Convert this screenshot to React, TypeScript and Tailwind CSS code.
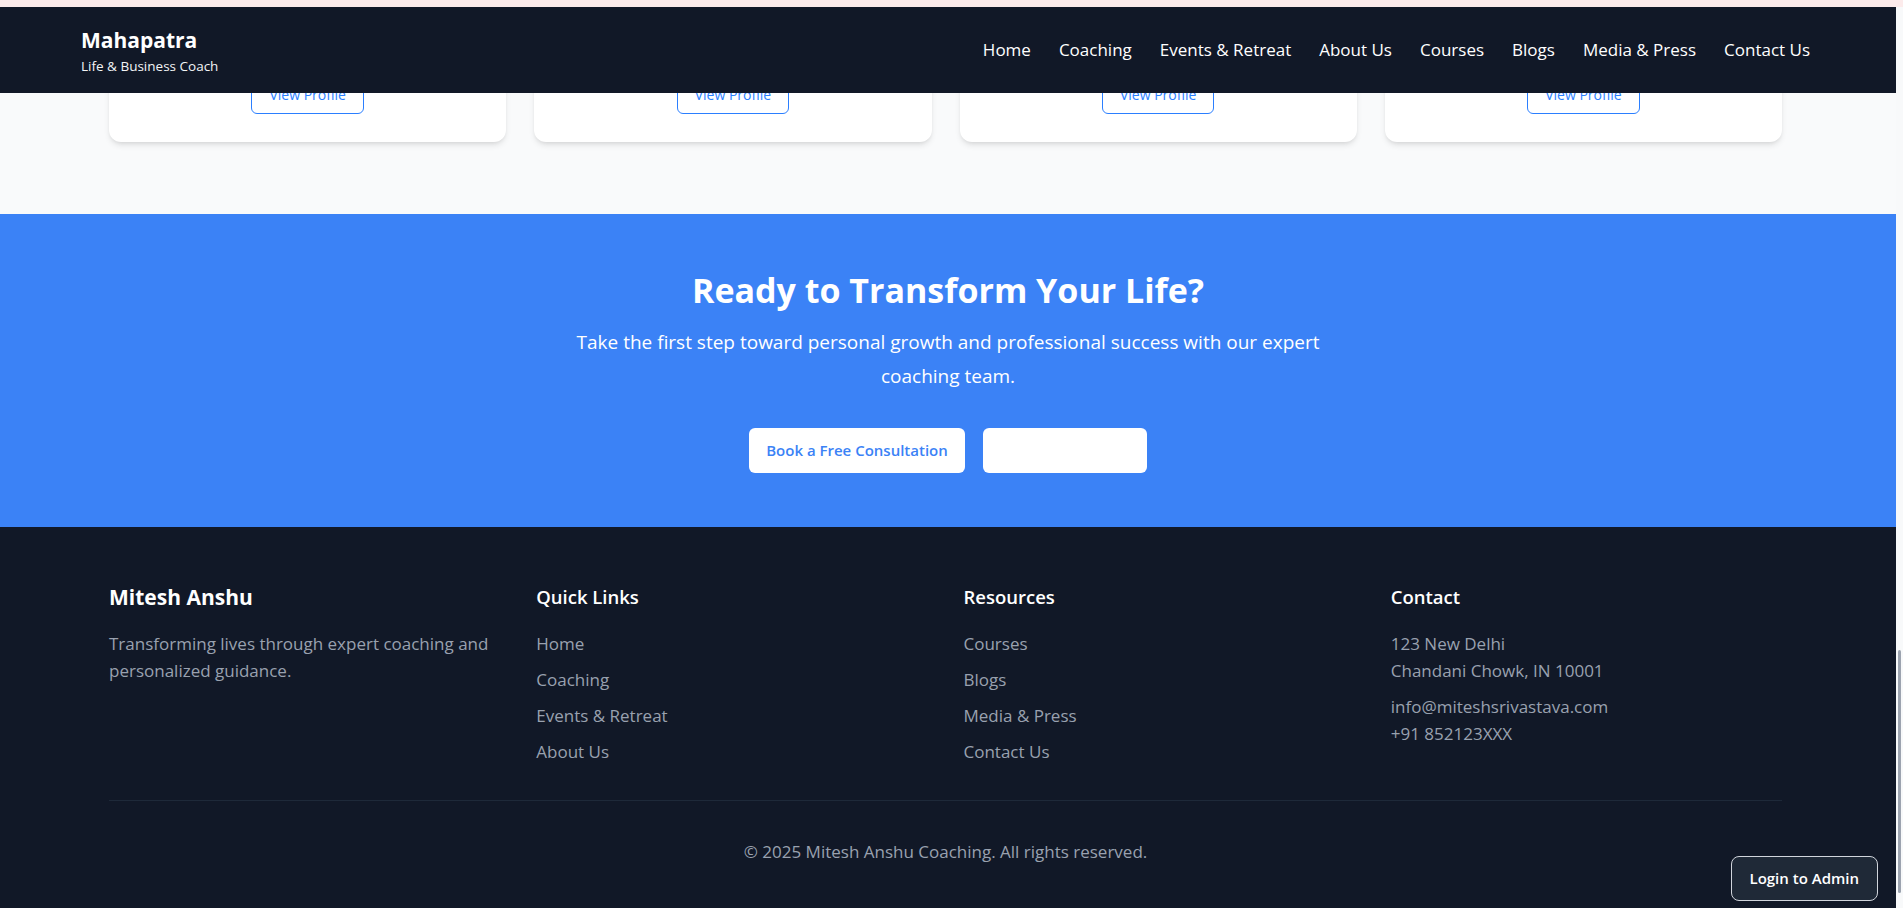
import React from "react";

const navLinks = [
  "Home",
  "Coaching",
  "Events & Retreat",
  "About Us",
  "Courses",
  "Blogs",
  "Media & Press",
  "Contact Us",
];

const quickLinks = ["Home", "Coaching", "Events & Retreat", "About Us"];
const resources = ["Courses", "Blogs", "Media & Press", "Contact Us"];

const CoachCard: React.FC = () => {
  return (
    <div className="flex flex-col items-center rounded-xl bg-white pt-[69px] pb-7 shadow-md">
      <button className="rounded-md border border-blue-500 px-[17px] py-2 text-sm text-blue-500">
        View Profile
      </button>
    </div>
  );
};

const FooterList: React.FC<{ title: string; items: string[] }> = ({ title, items }) => {
  return (
    <div>
      <h4 className="mb-[21px] text-[18.5px] font-semibold leading-7 text-white">{title}</h4>
      <ul className="space-y-3">
        {items.map((item) => (
          <li key={item} className="text-[17px] leading-6 text-gray-400">
            {item}
          </li>
        ))}
      </ul>
    </div>
  );
};

export default function App() {
  return (
    <div className="flex h-[908px] w-full flex-col overflow-hidden bg-white font-['Open_Sans','Noto_Sans',sans-serif]">
      <div className="h-[7px] shrink-0 bg-[#fcebeb]" />
      <div className="flex flex-1">
        <main className="relative flex flex-1 flex-col">
          {/* fixed navbar over the scrolled page */}
          <nav className="absolute left-0 right-0 top-0 z-10 flex h-[86px] items-center justify-between bg-[#111827] pl-[81px] pr-[86px]">
            <div className="flex flex-col">
              <span className="text-[21px] font-bold leading-8 text-white">Mahapatra</span>
              <span className="text-[13.5px] leading-5 text-gray-100">Life &amp; Business Coach</span>
            </div>
            <ul className="flex gap-7">
              {navLinks.map((link) => (
                <li key={link} className="text-[17px] text-white">
                  {link}
                </li>
              ))}
            </ul>
          </nav>

          <section className="bg-gray-50 pb-[72px]">
            <div className="ml-[109px] grid w-[1673px] grid-cols-4 gap-7">
              <CoachCard />
              <CoachCard />
              <CoachCard />
              <CoachCard />
            </div>
          </section>

          <section className="bg-[#3b82f6] pt-[56px] pb-[54px] text-center text-white">
            <h2 className="mb-[15px] text-[34px] font-bold leading-10">Ready to Transform Your Life?</h2>
            <p className="mx-auto max-w-3xl text-[19px] leading-[34px]">
              Take the first step toward personal growth and professional success with our expert coaching team.
            </p>
            <div className="mt-[35px] flex justify-center gap-[18px]">
              <button className="h-[45px] rounded-md bg-white px-[17px] text-[15px] font-semibold text-[#3b82f6]">
                Book a Free Consultation
              </button>
              <button className="h-[45px] w-[164px] rounded-md bg-white px-5 text-[15px] font-semibold text-white">
                Meet Our Coaches
              </button>
            </div>
          </section>

          <footer className="flex-1 bg-[#111827] pt-14">
            <div className="ml-[109px] w-[1673px]">
              <div className="grid grid-cols-4 gap-9">
                <div>
                  <h3 className="mb-[19px] text-[21px] font-bold leading-7 text-white">Mitesh Anshu</h3>
                  <p className="text-[17px] leading-[27px] text-gray-400">
                    Transforming lives through expert coaching and personalized guidance.
                  </p>
                </div>
                <FooterList title="Quick Links" items={quickLinks} />
                <FooterList title="Resources" items={resources} />
                <div>
                  <h4 className="mb-[19px] text-[18.5px] font-semibold leading-7 text-white">Contact</h4>
                  <p className="text-[17px] leading-[27px] text-gray-400">
                    123 New Delhi
                    <br />
                    Chandani Chowk, IN 10001
                  </p>
                  <p className="mt-[9px] text-[17px] leading-[27px] text-gray-400">
                    info@miteshsrivastava.com
                    <br />
                    +91 852123XXX
                  </p>
                </div>
              </div>
              <div className="mt-[36px] border-t border-gray-800 pt-[39px] text-center text-[17px] leading-6 text-gray-400">
                © 2025 Mitesh Anshu Coaching. All rights reserved.
              </div>
            </div>
          </footer>

          <button className="absolute bottom-[7px] right-[18px] z-20 h-[45px] rounded-lg border border-gray-300 bg-[#1f2937] px-[18px] text-[15px] font-semibold text-white">
            Login to Admin
          </button>
        </main>

        {/* scrollbar strip */}
        <div className="flex w-[7px] shrink-0 flex-col items-center bg-[#f8f9fa] pt-[643px]">
          <div className="h-[243px] w-[3px] rounded-full bg-[#9ca3af]" />
        </div>
      </div>
    </div>
  );
}
